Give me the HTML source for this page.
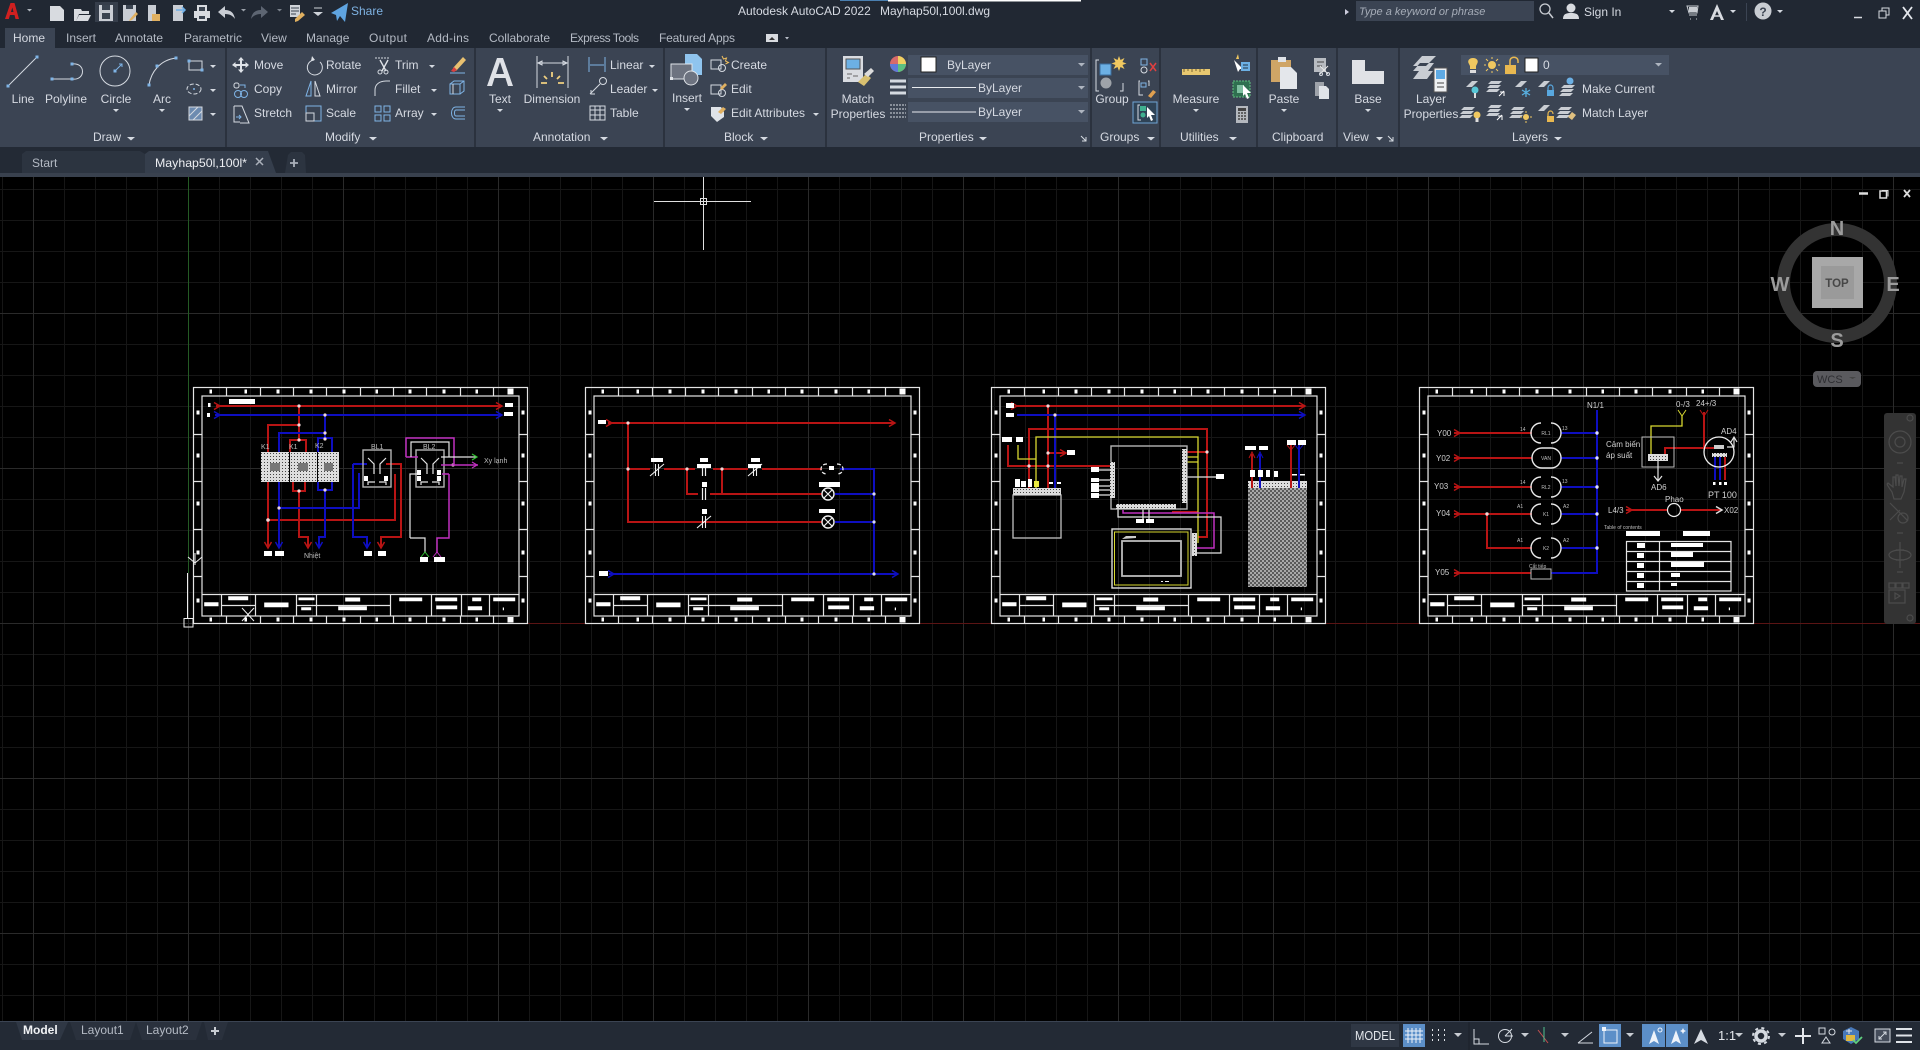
<!DOCTYPE html>
<html><head><meta charset="utf-8"><title>AutoCAD</title>
<style>
html,body{margin:0;padding:0;background:#000;overflow:hidden}
svg{display:block}
text{font-family:"Liberation Sans",sans-serif;font-size:12px;fill:#d6dae2}
.c{text-anchor:middle}
.m{fill:#b4bac4}
.d{font-size:7px;fill:#bdbdbd}
.e{font-size:8px;fill:#d0d0d0}
.r{stroke:#b81414;stroke-width:2;fill:none}
.b{stroke:#0e0ec0;stroke-width:2;fill:none}
.y{stroke:#d8d830;stroke-width:1.300;fill:none}
.g{stroke:#b4b4b4;stroke-width:1.400;fill:none}
.w{stroke:#e4e4e4;stroke-width:1.200;fill:none}
.p{stroke:#c030c0;stroke-width:1.500;fill:none}
.i{stroke:#d5dae1;stroke-width:1;fill:none}
.u{stroke:#7fb4e6;stroke-width:1;fill:none}
.f{fill:#fff}
</style></head><body>
<svg width="1920" height="1050" viewBox="0 0 1920 1050" xmlns="http://www.w3.org/2000/svg">
<defs>
<pattern id="g1" width="31" height="31" patternUnits="userSpaceOnUse" x="2" y="3"><path d="M.5 0V31M0 .5H31" stroke="#161616" fill="none"/></pattern>
<pattern id="g2" width="155" height="155" patternUnits="userSpaceOnUse" x="33" y="3"><path d="M.5 0V155M0 .5H155" stroke="#2a2a2a" fill="none"/></pattern>
<pattern id="hx" width="4" height="4" patternUnits="userSpaceOnUse"><rect width="4" height="4" fill="#a8a8a8"/><circle cx="1" cy="1" r=".9" fill="#222"/><circle cx="3" cy="3" r=".9" fill="#222"/></pattern>
<pattern id="dt" width="3" height="3" patternUnits="userSpaceOnUse"><rect width="3" height="3" fill="#ddd"/><rect width="1" height="1" fill="#444"/></pattern>
<path id="cr" d="M0 0h6l-3 3z" fill="#d5dae1"/>
<g id="fr">
<rect x="0" y="0" width="334" height="236" class="w"/>
<rect x="8.500" y="8.500" width="317" height="220" class="w"/>
<path class="w" d="M33 0V8M67 0V8M100 0V8M133 0V8M167 0V8M200 0V8M233 0V8M267 0V8M300 0V8M33 229V236M67 229V236M100 229V236M133 229V236M167 229V236M200 229V236M233 229V236M267 229V236M300 229V236M0 47H8M0 94H8M0 142H8M0 189H8M326 47H334M326 94H334M326 142H334M326 189H334M8.500 207H325.500M28 207V229M62 207V229M103 207V229M123 207V229M197 207V229M238 207V229M268 207V229M296 207V229M28 218H62M103 218H197"/>
<g class="f"><path d="M16 2h2.500v4H16zM51 2h2.500v4H51zM83 2h3v4h-3zM116 2h3v4h-3zM149 2h3v4h-3zM182 2h2.500v4H182zM215 2h3v4h-3zM249 2h3v4h-3zM282 2h2.500v4H282zM314 1h6v6h-6zM16 230h2.500v4H16zM51 230h2.500v4H51zM83 230h3v4h-3zM116 230h3v4h-3zM149 230h3v4h-3zM182 230h2.500v4H182zM215 230h3v4h-3zM249 230h3v4h-3zM282 230h2.500v4H282zM314 229.500h6v5.500h-6zM3 23h3v4H3zM3 66h3v4H3zM3 114h3v4H3zM3 163h3v4H3zM3 211h3v4H3zM328 23h3v4h-3zM328 66h3v4h-3zM328 114h3v4h-3zM328 163h3v4h-3zM328 211h3v4h-3z"/>
<path d="M10.700 214.700h14.300v4H10.700zM34.700 208.700h20v4h-20zM70.700 215h24.300v4.700H70.700zM105 210h16v2.700h-16zM107.700 219.700h10v3h-10zM151.700 210h15v4h-15zM144.700 218.700h28.700v4h-28.700zM205.700 210h23v3.700h-23zM241.700 210h22v3.700h-22zM242.700 218h21v3.700h-21zM278.700 210h9v3.700h-9zM274.300 218.700h14.300v4h-14.300zM299.700 210h22v3.700h-22zM309.300 220h1.200v2.700h-1.200z"/></g>
</g>
<g id="coil" fill="none" stroke="#e8e8e8" stroke-width="1.400"><path d="M-5-10A10 10 0 0 0-5 10M5-10A10 10 0 0 1 5 10"/></g>
<path id="ah" d="M-6-3.500L0 0L-6 3.500" fill="none" stroke-width="1.500"/>
<g id="lamp"><circle r="6" fill="none" stroke="#f0f0f0" stroke-width="1.400"/><path d="M-4-4L4 4M4-4L-4 4" stroke="#f0f0f0" stroke-width="1.200"/></g>
<g id="con"><path d="M-1.500-6V6M1.500-6V6" stroke="#f0f0f0" stroke-width="1.200"/></g>
<g id="nc"><path d="M-1.500-6V6M1.500-6V6M-7 6L7-6" stroke="#f0f0f0" stroke-width="1.100"/></g>
<rect id="dot" x="-1.500" y="-1.500" width="3" height="3" fill="#7fb4e6"/>
<g id="st"><path d="M-6-5h11l-3 3h-11zM-7-1h11l-3 3h-11zM-8 3h11l-3 3h-11z" fill="#c9cdd3"/></g>
<g id="sh"><path d="M-6-1l6-6h6l-6 6z" fill="#c9cdd3"/></g>
</defs>

<!-- canvas -->
<rect x="0" y="177" width="1920" height="844" fill="#000"/>
<rect x="0" y="177" width="1920" height="844" fill="url(#g1)"/>
<rect x="0" y="177" width="1920" height="844" fill="url(#g2)"/>
<path d="M188.500 177V573" stroke="#245a24"/>
<path d="M193 623.500H1920" stroke="#5a1414"/>

<!-- frames -->
<use href="#fr" x="193.500" y="387.500"/>
<use href="#fr" x="585.500" y="387.500"/>
<use href="#fr" x="991.500" y="387.500"/>
<use href="#fr" x="1419.500" y="387.500"/>

<!-- FRAME 1 -->
<g>
<path class="r" d="M216 406H502M299 406V440M268 548V425H299M290 452V440H306V452M293 482V491H305V482M299 491V537H308V548M268 520H395V474M386 464H401V537H381V548"/>
<path class="b" d="M215 415H502M325 415V438M279 548V433H325M318 452V438H332V452M318 482V490H332V482M325 490V537H319V548M279 508H359V473M353 464H367M353 464V537H367V548"/>
<use href="#ah" x="502" y="406" stroke="#b81414"/><use href="#ah" x="220" y="406" stroke="#b81414"/>
<use href="#ah" x="502" y="415" stroke="#0e0ec0"/><use href="#ah" x="220" y="415" stroke="#0e0ec0"/>
<use href="#ah" transform="translate(268 548) rotate(90)" stroke="#b81414"/><use href="#ah" transform="translate(279 548) rotate(90)" stroke="#0e0ec0"/>
<use href="#ah" transform="translate(308 548) rotate(90)" stroke="#b81414"/><use href="#ah" transform="translate(319 548) rotate(90)" stroke="#0e0ec0"/>
<use href="#ah" transform="translate(367 548) rotate(90)" stroke="#0e0ec0"/><use href="#ah" transform="translate(381 548) rotate(90)" stroke="#b81414"/>
<rect x="261" y="452" width="28" height="30" fill="url(#dt)"/><rect x="290" y="452" width="27" height="30" fill="url(#dt)"/><rect x="318" y="452" width="21" height="30" fill="url(#dt)"/>
<rect x="270" y="463" width="10" height="8" fill="#777"/><rect x="298" y="463" width="10" height="8" fill="#777"/><rect x="324" y="463" width="9" height="8" fill="#777"/>
<g fill="#f0d8d8"><circle cx="299" cy="406" r="1.600"/><circle cx="299" cy="425" r="1.600"/><circle cx="299" cy="440" r="1.600"/><circle cx="299" cy="491" r="1.600"/><circle cx="268" cy="520" r="1.800"/><circle cx="325" cy="415" r="1.600"/><circle cx="325" cy="433" r="1.600"/><circle cx="325" cy="439" r="1.600"/><circle cx="325" cy="490" r="1.600"/><circle cx="279" cy="508" r="1.600"/><circle cx="453" cy="465" r="1.600"/></g>
<rect x="363" y="450" width="28" height="37" class="g"/><rect x="416" y="450" width="28" height="37" class="g"/>
<path class="w" d="M368 458l6 6v10M386 458l-6 6v10M421 458l6 6v10M439 458l-6 6v10M368 485v-3h7M386 485v-3h-7M421 485v-3h7M439 485v-3h-7"/>
<g class="f"><path d="M364 476h4v5h-4zM384 476h4v5h-4zM417 470h4v5h-4zM437 470h4v5h-4zM417 476h4v5h-4zM437 476h4v5h-4z"/></g>
<path class="p" d="M406 457V438H454V465M406 457H418M441 465H478"/>
<path class="w" d="M411 457V442H449V457M441 457H477M410 538V474H417M410 538H425V553"/>
<path class="p" d="M449 474V538H437V553M442 474H449"/>
<path d="M472 454l5 3-5 3" stroke="#30c030" fill="none" stroke-width="1.200"/>
<path d="M472 462l5 3-5 3" stroke="#c030c0" fill="none" stroke-width="1.200"/>
<path d="M421 557l4-5 4 5" stroke="#30c030" fill="none"/><path d="M433 557l4-5 4 5" stroke="#c030c0" fill="none"/>
<g class="f"><path d="M229 399h26v5h-26zM208 403h2.500v4H208zM207 413h3v4h-3zM505 403h8v4h-8zM504 412h9v4h-9zM264 551h8v5h-8zM275 551h9v5h-9zM364 551h8v5h-8zM378 551h8v5h-8zM420 557h8v5h-8zM434 557h11v5h-11z"/></g>
<text x="261" y="449" class="d">K1</text><text x="289" y="449" class="d">K1</text><text x="315" y="448" class="d">K2</text><text x="371" y="449" class="d">BL1</text><text x="423" y="449" class="d">BL2</text><text x="484" y="463" class="d">Xy lạnh</text><text x="304" y="558" class="d">Nhiệt</text>
<path d="M195 553V565M188 557l7 6 7-6" stroke="#eee" fill="none"/>
<path d="M242 608L254 621M254 608L242 621" stroke="#eee" fill="none"/>
<path d="M187.500 573V618" stroke="#eee"/><rect x="184" y="618.500" width="9" height="8.500" fill="none" stroke="#eee"/>
</g>

<!-- FRAME 2 -->
<g>
<path class="r" d="M608 423H895M628 423V522H822M628 469H650M664 469H695M713 469H748M762 469H822M687 469V494H698M710 494H822M722 469V494"/>
<path class="b" d="M840 469H874V574M835 494H874M835 522H874M609 574H898"/>
<use href="#ah" x="895" y="423" stroke="#b81414"/><use href="#ah" x="612" y="423" stroke="#b81414"/>
<use href="#ah" x="898" y="574" stroke="#0e0ec0"/><use href="#ah" x="614" y="574" stroke="#0e0ec0"/>
<g fill="#f0d8d8"><circle cx="628" cy="423" r="1.600"/><circle cx="628" cy="469" r="1.600"/><circle cx="687" cy="469" r="1.600"/><circle cx="722" cy="469" r="1.600"/></g>
<g fill="#d8d8f0"><circle cx="874" cy="494" r="1.600"/><circle cx="874" cy="522" r="1.600"/><circle cx="874" cy="574" r="1.600"/></g>
<use href="#lamp" x="828" y="494"/><use href="#lamp" x="828" y="522"/>
<path d="M827 464c-8 0-8 10 0 10M837 464c8 0 8 10 0 10" stroke="#eee" stroke-dasharray="4 2" fill="none" stroke-width="1.200"/>
<use href="#nc" x="657" y="470"/><use href="#con" x="704" y="470"/><use href="#nc" x="755" y="470"/><use href="#con" x="704" y="494"/><use href="#nc" x="704" y="522"/>
<g class="f"><path d="M598 420h8v4h-8zM651 458h12v4h-12zM700 458h8v4h-8zM751 458h9v4h-9zM702 482h5v5h-5zM702 509h5v5h-5zM819 482h21v5h-21zM819 509h16v4h-16zM829 466h5v4h-5zM599 571h9v5h-9zM697 464h14v4h-14zM748 464h13v4h-13z"/></g>
</g>

<!-- FRAME 3 -->
<g>
<path class="r" d="M1017 406H1305M1048 406V488M1029 488V429H1207V537H1198M1008 445V466H1112M1048 453H1065M1187 452H1207M1172 512H1198"/>
<path class="b" d="M1017 415H1305M1055 415V488"/>
<path class="y" d="M1036 488V437H1198V543M1018 445V459H1036M1187 457H1198M1187 462H1198"/>
<path class="p" d="M1123 510V513H1214V548H1197"/>
<path class="w" d="M1118 509V517H1221V553H1197M1187 477H1216M1143 509V519M1149 509V519M1091 470H1110M1099 480H1110M1099 486H1110M1099 490H1110M1099 495H1110"/>
<use href="#ah" x="1017" y="406" stroke="#b81414"/><use href="#ah" x="1305" y="406" stroke="#b81414"/><use href="#ah" x="1305" y="415" stroke="#0e0ec0"/><use href="#ah" x="1066" y="453" stroke="#b81414"/>
<g fill="#f0d8d8"><circle cx="1048" cy="406" r="1.600"/><circle cx="1048" cy="453" r="1.600"/><circle cx="1048" cy="466" r="1.600"/><circle cx="1029" cy="466" r="1.600"/><circle cx="1055" cy="415" r="1.600"/><circle cx="1207" cy="452" r="1.600"/></g>
<rect x="1013" y="495" width="48" height="43" class="g"/>
<rect x="1013" y="488" width="48" height="7" fill="url(#dt)"/>
<rect x="1111" y="446" width="76" height="63" class="g"/>
<rect x="1182" y="449" width="5" height="54" fill="url(#dt)"/><rect x="1110" y="462" width="5" height="36" fill="url(#dt)"/><rect x="1116" y="504" width="60" height="5" fill="url(#dt)"/>
<rect x="1112" y="529" width="79" height="59" fill="none" stroke="#ddd" stroke-width="1.400"/>
<rect x="1114.500" y="532" width="73.500" height="53" fill="none" stroke="#d8d830" stroke-width="1"/>
<rect x="1122" y="541" width="59" height="35" fill="none" stroke="#bbb" stroke-width="1.800"/>
<path d="M1122 539l4-3h10v2z" fill="#ccc"/>
<path d="M1161 581h2v1h-2zM1165 581h4v1h-4z" fill="#eee"/>
<rect x="1192" y="533" width="5" height="23" fill="url(#dt)"/>
<rect x="1248" y="488" width="59" height="99" fill="url(#hx)"/>
<rect x="1248" y="481" width="59" height="7" fill="url(#dt)"/>
<path class="r" d="M1252 488V454M1291 445V488"/><path class="b" d="M1260 488V454M1299 445V488"/>
<path d="M1249 458l3-6 3 6" stroke="#b81414" fill="none"/><path d="M1257 458l3-6 3 6" stroke="#0e0ec0" fill="none"/>
<path d="M1287 445l4 5 4-5" stroke="#b81414" fill="none"/><path d="M1295 445l4 5 4-5" stroke="#0e0ec0" fill="none"/>
<g class="f"><path d="M1006 403h8v5h-8zM1006 413h8v4h-8zM1067 450h8v5h-8zM1002 437h10v5h-10zM1016 437h7v5h-7zM1015 479h5v8h-5zM1021 481h5v6h-5zM1028 479h4v8h-4zM1216 474h8v5h-8zM1091 467h8v5h-8zM1091 478h8v4h-8zM1091 483h8v9h-8zM1091 493h8v5h-8zM1136 519h8v4h-8zM1146 519h8v4h-8zM1245 446h11v4h-11zM1259 446h9v4h-9zM1287 440h9v5h-9zM1298 440h8v5h-8zM1250 470h5v7h-5zM1258 470h5v7h-5zM1266 470h4v7h-4zM1274 471h4v6h-4zM1292 474h5v1.500h-5zM1300 474h5v1.500h-5zM1049 482h4v2h-4zM1057 482h4v2h-4z"/></g>
<rect x="1034" y="481" width="5" height="6" fill="#e8e840"/>
</g>

<!-- FRAME 4 -->
<g>
<path class="r" d="M1454 433H1532M1454 458H1532M1454 487H1532M1454 514H1532M1487 514V548H1532M1454 573H1531M1626 510H1667M1681 510H1722M1704 448V412M1665 455V448H1723M1725 455V480"/>
<path class="b" d="M1597 410V573H1551M1561 433H1597M1561 458H1597M1561 487H1597M1561 514H1597M1561 548H1597M1715 455V480M1720 455V480"/>
<path class="y" d="M1651 454V426H1682V416"/>
<path d="M1678 410l4 6 4-6" stroke="#d8d830" fill="none"/><path d="M1700 410l4 6 4-6" stroke="#b81414" fill="none"/>
<use href="#ah" x="1460" y="433" stroke="#b81414"/><use href="#ah" x="1460" y="458" stroke="#b81414"/><use href="#ah" x="1460" y="487" stroke="#b81414"/><use href="#ah" x="1460" y="514" stroke="#b81414"/><use href="#ah" x="1460" y="573" stroke="#b81414"/><use href="#ah" x="1632" y="510" stroke="#b81414"/><use href="#ah" x="1722" y="510" stroke="#ddd"/>
<g fill="#dfdfff"><circle cx="1597" cy="433" r="1.700"/><circle cx="1597" cy="458" r="1.700"/><circle cx="1597" cy="487" r="1.700"/><circle cx="1597" cy="514" r="1.700"/><circle cx="1597" cy="548" r="1.700"/></g><circle cx="1487" cy="514" r="1.700" fill="#f0d8d8"/>
<use href="#coil" x="1546" y="433"/><use href="#coil" x="1546" y="487"/><use href="#coil" x="1546" y="514"/><use href="#coil" x="1546" y="548"/>
<rect x="1532" y="448" width="29" height="20" rx="10" fill="none" stroke="#e8e8e8" stroke-width="1.400"/>
<rect x="1531" y="569" width="20" height="10" fill="none" stroke="#bbb"/>
<rect x="1642" y="437" width="32" height="30" fill="none" stroke="#bbb"/>
<rect x="1648" y="454" width="20" height="7" fill="url(#dt)"/>
<path class="w" d="M1658 461V480M1654 476l4 5 4-5"/>
<circle cx="1719" cy="452" r="15" fill="none" stroke="#eee" stroke-width="1.300"/>
<rect x="1714" y="445" width="10" height="4" fill="#ccc"/><rect x="1712" y="453" width="15" height="4" fill="url(#dt)"/>
<path class="w" d="M1727 447H1734V438M1731 442l3-5 3 5"/>
<circle cx="1674" cy="510" r="6.500" fill="none" stroke="#eee" stroke-width="1.200"/>
<g class="f"><path d="M1713 482h2.500v3h-2.500zM1719 482h2.500v3h-2.500zM1724 482h3v3h-3zM1626 531h34v5h-34zM1683 531h27v5h-27zM1637 543h8v5h-8zM1637 553h7v5h-7zM1637 563h7v5h-7zM1637 573h7v5h-7zM1637 583h7v5h-7zM1671 543h32v4h-32zM1671 552h22v5h-22zM1671 562h33v5h-33zM1671 573h9v4h-9zM1671 583h6v3h-6z"/></g>
<path class="w" d="M1626.500 541.500H1731V591H1626.500ZM1626.500 551.500H1731M1626.500 561.500H1731M1626.500 571.500H1731M1626.500 581.500H1731M1659.500 541.500V591"/>
<text x="1437" y="436" class="e">Y00</text><text x="1436" y="461" class="e">Y02</text><text x="1434" y="489" class="e">Y03</text><text x="1436" y="516" class="e">Y04</text><text x="1435" y="575" class="e">Y05</text>
<text x="1587" y="408" class="e">N1/1</text><text x="1676" y="407" class="e">0-/3</text><text x="1696" y="406" class="e">24+/3</text><text x="1721" y="434" class="e">AD4</text>
<text x="1606" y="447" class="e">Cảm biến</text><text x="1606" y="458" class="e">áp suất</text><text x="1651" y="490" class="e">AD6</text>
<text x="1708" y="498" style="font-size:9px;fill:#d0d0d0">PT 100</text><text x="1665" y="502" class="e">Phao</text><text x="1608" y="513" class="e">L4/3</text><text x="1724" y="513" class="e">X02</text>
<text x="1604" y="529" style="font-size:5px;fill:#bdbdbd">Table of contents</text>
<text x="1546" y="435" class="c" style="font-size:5px;fill:#bdbdbd">RL1</text><text x="1546" y="460" class="c" style="font-size:5px;fill:#bdbdbd">VAN</text><text x="1546" y="489" class="c" style="font-size:5px;fill:#bdbdbd">RL2</text><text x="1546" y="516" class="c" style="font-size:5px;fill:#bdbdbd">K1</text><text x="1546" y="550" class="c" style="font-size:5px;fill:#bdbdbd">K2</text>
<text x="1520" y="431" style="font-size:5px;fill:#bdbdbd">14</text><text x="1562" y="430" style="font-size:5px;fill:#bdbdbd">13</text><text x="1520" y="484" style="font-size:5px;fill:#bdbdbd">14</text><text x="1562" y="483" style="font-size:5px;fill:#bdbdbd">13</text><text x="1517" y="508" style="font-size:5px;fill:#bdbdbd">A1</text><text x="1563" y="508" style="font-size:5px;fill:#bdbdbd">A2</text><text x="1517" y="542" style="font-size:5px;fill:#bdbdbd">A1</text><text x="1563" y="542" style="font-size:5px;fill:#bdbdbd">A2</text><text x="1529" y="568" style="font-size:5px;fill:#bdbdbd">Cắt tiếp</text>
</g>

<!-- crosshair -->
<path d="M654 201.500H751M703.500 177V250" stroke="#e0e0e0"/><rect x="700.500" y="198.500" width="6" height="6" fill="none" stroke="#e0e0e0"/>

<!-- view controls -->
<path d="M1859 193.500h9" stroke="#ddd" stroke-width="2.500"/><rect x="1880" y="191" width="6.500" height="7" fill="none" stroke="#ddd" stroke-width="1.500"/><path d="M1882 190.500h6v6" stroke="#ddd" fill="none"/><path d="M1904 190l6 7M1910 190l-6 7" stroke="#ddd" stroke-width="1.800"/>

<!-- viewcube -->
<circle cx="1837" cy="283" r="53.500" fill="none" stroke="#333" stroke-width="13"/>
<rect x="1812" y="257" width="51" height="51" fill="#a8a8a8"/><rect x="1821" y="266" width="33" height="33" fill="#9a9a9a"/>
<text x="1837" y="287" class="c" style="font-size:11.500px;font-weight:bold;fill:#474747">TOP</text>
<text x="1837" y="235" class="c" style="font-size:20px;font-weight:bold;fill:#9c9c9c">N</text><text x="1837" y="347" class="c" style="font-size:20px;font-weight:bold;fill:#9c9c9c">S</text><text x="1780" y="291" class="c" style="font-size:20px;font-weight:bold;fill:#9c9c9c">W</text><text x="1893" y="291" class="c" style="font-size:20px;font-weight:bold;fill:#9c9c9c">E</text>
<rect x="1813" y="371" width="48" height="16" rx="4" fill="#5a5a5e"/><text x="1817" y="383" style="font-size:11px;fill:#2e2e32">WCS</text><path d="M1849 377h7l-3.500 2z" fill="#444"/>

<!-- navbar -->
<rect x="1884" y="413" width="32" height="211" rx="3" fill="#333"/>
<g fill="none" stroke="#4c4c4c" stroke-width="1.200">
<circle cx="1900" cy="442" r="11"/><circle cx="1900" cy="442" r="5"/>
<path d="M1892 492c-4-6-6-8-4-9l5 4v-10l2 0 1 9v-11h2l1 11 1-10h2l0 11 2-8h2l-2 13-3 7h-7z"/>
<path d="M1890 503l18 18M1890 520l10-10"/><circle cx="1903" cy="518" r="5"/>
<path d="M1900 542v26M1896 550h8M1896 560h8"/><ellipse cx="1900" cy="555" rx="11" ry="5"/>
<rect x="1889" y="583" width="6" height="5"/><rect x="1896" y="583" width="6" height="5"/><rect x="1903" y="583" width="6" height="5"/><rect x="1889" y="590" width="16" height="13"/><path d="M1895 593l5 3-5 3z"/>
<circle cx="1910" cy="418" r="3"/><circle cx="1910" cy="618" r="3"/><path d="M1897 463h6M1897 533h6M1897 572h6"/>
</g>

<!-- TITLE & RIBBON BG -->
<rect x="0" y="0" width="1920" height="48" fill="#212833"/>
<rect x="840" y="0" width="48" height="1" fill="#4a7fb0"/><rect x="888" y="0" width="193" height="1.500" fill="#fff"/>
<rect x="0" y="48" width="1920" height="99" fill="#3b4453"/>
<rect x="0" y="147" width="1920" height="26" fill="#232a35"/>
<rect x="0" y="173" width="1920" height="4" fill="#39414e"/>

<!-- app logo + QAT -->
<path d="M5 19L10.500 3H14.500L19 19H15.500L14.500 15H10L8.800 19ZM11 12H13.500L12.300 7.500Z" fill="#d02020"/>
<path d="M27 9h5l-2.500 2.500z" fill="#b0b5bd"/>
<path d="M50 6h10l4 4v11H50z" fill="#d8dbe0"/>
<path d="M74 9h7l1 2h7v3H79l-3 7h-2zM79 15h12l-3 6H76z" fill="#d8dbe0"/>
<rect x="95" y="2" width="23" height="20" fill="#363e4b"/>
<path d="M99 5h14v16H99z" fill="#c9cdd4"/><rect x="102" y="5" width="8" height="5" fill="#3a4350"/><rect x="102" y="13" width="8" height="6" fill="#3a4350"/>
<path d="M123 5h13v16h-13z" fill="#c9cdd4"/><rect x="126" y="5" width="7" height="4" fill="#3a4350"/><path d="M130 19l6-7 2 2-6 6-3 1z" fill="#e0b060"/>
<path d="M148 5h8v16h-8z" fill="#c9cdd4"/><path d="M152 14h8v7h-8z" fill="#e0b060"/>
<path d="M173 5h10v16h-10z" fill="#c9cdd4"/><path d="M176 10h9M182 7l3 3-3 3" stroke="#6fb0e8" fill="none" stroke-width="1.500"/>
<path d="M197 5h10v6h3v7h-3v3h-10v-3h-3v-7h3z" fill="#d8dbe0"/><rect x="199" y="7" width="6" height="4" fill="#3a4350"/><rect x="199" y="16" width="6" height="3" fill="#3a4350"/>
<path d="M218 12l7-6v4c6 0 9 3 10 9-2-3-5-5-10-5v4z" fill="#c9cdd4"/>
<path d="M241 9h5l-2.500 2.500z" fill="#9aa0a9"/>
<path d="M268 12l-7-6v4c-6 0-9 3-10 9 2-3 5-5 10-5v4z" fill="#5d6572"/>
<path d="M277 9h5l-2.500 2.500z" fill="#7b828c"/>
<rect x="290" y="5" width="10" height="12" fill="#cfd3d9"/><path d="M295 19l7-7 3 3-7 6-3 1z" fill="#e0b060"/><path d="M291 8h8M291 11h8M291 14h5" stroke="#3a4350"/>
<path d="M314 8h8" stroke="#cfd3d9"/><path d="M313 12h10l-5 4z" fill="#cfd3d9"/>
<path d="M331 13L348 3l-3 19-5-6-3 5-1-6z" fill="#5fa4e0"/>
<text x="351" y="15" style="fill:#7eb2e2">Share</text>
<text x="738" y="15">Autodesk AutoCAD 2022</text><text x="880" y="15">Mayhap50l,100l.dwg</text>

<!-- right header -->
<path d="M1345 9l4 3-4 3z" fill="#ccd"/>
<rect x="1356" y="1" width="178" height="20" fill="#3b4453"/>
<text x="1359" y="15" style="font-style:italic;font-size:11px;fill:#a6adb8">Type a keyword or phrase</text>
<circle cx="1545" cy="9" r="5" fill="none" stroke="#c8ccd2" stroke-width="1.300"/><path d="M1549 13l4 5" stroke="#c8ccd2" stroke-width="1.500"/>
<circle cx="1571" cy="8" r="4.500" fill="#d8dbe0"/><path d="M1563 19c0-5 3-6 8-6s8 1 8 6z" fill="#d8dbe0"/>
<text x="1584" y="16">Sign In</text>
<use href="#cr" x="1669" y="10"/>
<path d="M1687 6h11l-1 7h-8zM1689 15h8M1690 19h1M1696 19h1" stroke="#c8ccd2" fill="none"/><path d="M1689 7h8v5h-8z" fill="#c8ccd2"/>
<path d="M1710 20l7-16 7 16h-3l-4-9-4 9z" fill="#d8dbe0"/><path d="M1713 16h8" stroke="#d8dbe0" stroke-width="1.500"/>
<use href="#cr" x="1730" y="10"/><path d="M1746.500 3v18" stroke="#3b4453"/>
<circle cx="1763" cy="11" r="8.500" fill="#c8ccd2"/><text x="1763" y="16" class="c" style="font-size:12px;font-weight:bold;fill:#3a4350">?</text>
<use href="#cr" x="1777" y="10"/>
<path d="M1854 17.500h8" stroke="#d8dbe0" stroke-width="1.500"/><rect x="1879" y="11" width="7" height="7" fill="none" stroke="#d8dbe0"/><path d="M1882 11V8h7v7h-3" fill="none" stroke="#d8dbe0"/>
<path d="M1903 7l9 12M1912 7l-9 12" stroke="#e4e7ec" stroke-width="1.800"/>

<!-- ribbon tabs -->
<rect x="5" y="28" width="50" height="20" fill="#3b4453"/>
<text x="13" y="42">Home</text>
<text x="66" y="42" class="m">Insert</text><text x="115" y="42" class="m">Annotate</text><text x="184" y="42" class="m">Parametric</text><text x="261" y="42" class="m">View</text><text x="306" y="42" class="m">Manage</text><text x="369" y="42" class="m" textLength="38">Output</text><text x="427" y="42" class="m" textLength="42">Add-ins</text><text x="489" y="42" class="m" textLength="61">Collaborate</text><text x="570" y="42" class="m" textLength="69">Express Tools</text><text x="659" y="42" class="m" textLength="76">Featured Apps</text>
<rect x="766" y="34" width="12" height="8" fill="#d8dbe0"/><path d="M769 40l3-3 3 3z" fill="#333"/><path d="M785 37h4l-2 2.500z" fill="#b9bfc9"/>

<!-- ribbon separators -->
<path d="M226 48V147M475 48V147M664 48V147M826 48V147M1091 48V147M1160 48V147M1257 48V147M1337 48V147M1399 48V147" stroke="#262d38" stroke-width="1.500"/>

<!-- Draw -->
<path class="i" d="M8 86L37 57"/><use href="#dot" x="8" y="86"/><use href="#dot" x="37" y="57"/>
<path class="i" d="M52 79H72M72 64C86 62 86 81 72 79"/><use href="#dot" x="52" y="79"/><use href="#dot" x="72" y="79"/><use href="#dot" x="72" y="64"/>
<circle cx="115" cy="71" r="15" class="i"/><path class="u" d="M115 71L122 64M119 64h3v3"/><use href="#dot" x="115" y="71"/>
<path class="i" d="M149 85C151 72 160 60 176 58"/><use href="#dot" x="149" y="85"/><use href="#dot" x="157" y="66"/><use href="#dot" x="176" y="58"/>
<text x="23" y="103" class="c">Line</text><text x="66" y="103" class="c">Polyline</text><text x="116" y="103" class="c">Circle</text><text x="162" y="103" class="c">Arc</text>
<use href="#cr" x="113" y="109"/><use href="#cr" x="159" y="109"/>
<rect x="189" y="61" width="13" height="9" class="i"/><use href="#dot" x="189" y="61"/><use href="#dot" x="202" y="70"/>
<ellipse cx="194" cy="89" rx="7" ry="5" class="i" stroke-dasharray="4 2"/><circle cx="194" cy="89" r="1" fill="#7fb4e6"/>
<rect x="189" y="107" width="13" height="13" fill="#6d8bb0" stroke="#d5dae1"/><path d="M189 116l9-9M193 120l9-9" stroke="#d5dae1"/>
<use href="#cr" x="210" y="65"/><use href="#cr" x="210" y="89"/><use href="#cr" x="210" y="113"/>
<text x="93" y="141">Draw</text><path d="M127 137h8l-4 3.500z" fill="#d5dae1"/>

<!-- Modify -->
<path d="M241 57l3 3.500h-2V64h3.500v-2l3.500 3-3.500 3v-2H242v3.500h2l-3 3.500-3-3.500h2V66h-3.500v2L232 65l3.500-3v2H240v-3.500h-2z" fill="#dfe3e8"/>
<path class="u" d="M240 85h5v3"/><circle cx="238" cy="94" r="3.500" class="u"/><circle cx="244" cy="94" r="3.500" class="u"/><rect x="234" y="83" width="5" height="5" class="i" rx="2"/>
<path class="i" d="M234 106h8l7 17h-9M234 106v16h6"/><path class="u" d="M236 117h5M239 115l2 2-2 2"/>
<path class="i" d="M320 62a7.500 7.500 0 1 1-6-2"/><path d="M312 56l3 4-4 1z" fill="#dfe3e8"/>
<path class="u" d="M311 81L306 96H311z"/><path class="i" d="M315 81L320 96H315z"/>
<rect x="306" y="106" width="15" height="15" class="u"/><rect x="306" y="113" width="8" height="8" class="i"/>
<path class="i" d="M375 58h14" stroke-dasharray="2 1"/><path d="M380 60l6 11M388 60l-6 11" stroke="#dfe3e8" stroke-width="1.400"/><circle cx="380" cy="72" r="2" class="i"/><circle cx="386" cy="72" r="2" class="i"/>
<path class="i" d="M375 96V90C375 84 380 81 386 81H390"/>
<rect x="375" y="106" width="6" height="6" class="u"/><rect x="384" y="106" width="6" height="6" class="u"/><rect x="375" y="115" width="6" height="6" class="u"/><rect x="384" y="115" width="6" height="6" class="u"/>
<text x="254" y="69">Move</text><text x="326" y="69">Rotate</text><text x="395" y="69">Trim</text><text x="254" y="93">Copy</text><text x="326" y="93">Mirror</text><text x="395" y="93">Fillet</text><text x="254" y="117">Stretch</text><text x="326" y="117">Scale</text><text x="395" y="117">Array</text>
<use href="#cr" x="429" y="65"/><use href="#cr" x="431" y="89"/><use href="#cr" x="431" y="113"/>
<path d="M453 68l10-11 3 3-10 11z" fill="#e8c070"/><path d="M451 71l3-4 3 3-3 2z" fill="#d84040"/><path class="u" d="M450 73h15"/>
<path class="u" d="M450 84h10v10h-10zM450 84l4-3h10v10l-4 3M460 84l4-3"/><path class="i" d="M453 84v10"/>
<path class="u" d="M465 107h-9c-6 0-6 12 0 12h9M465 110h-9c-2 0-2 6 0 6h9"/>
<text x="325" y="141">Modify</text><path d="M369 137h8l-4 3.500z" fill="#d5dae1"/>

<!-- Annotation -->
<path d="M487 86L497 58H503L513 86H508L505.500 78H494.500L492 86ZM496 74H504L500 62Z" fill="#dfe2e7"/>
<text x="500" y="103" class="c">Text</text><use href="#cr" x="497" y="109"/>
<path class="i" d="M537 56V88M568 56V88M538 63H567M538 63l4-2v4zM567 63l-4-2v4z"/>
<path d="M552 72v5M544 76l3 3M560 76l-3 3M541 83h6M558 83h6" stroke="#f0d080" stroke-width="1.800"/>
<text x="552" y="103" class="c">Dimension</text>
<path class="u" d="M589 57V72M605 57V72M590 65H604"/>
<path class="i" d="M590 94L600 84M591 90v4h4"/><circle cx="603" cy="81" r="3.500" class="i"/>
<rect x="590" y="106" width="15" height="14" class="i"/><path class="i" d="M590 110h15M590 115h15M595 106v14M600 106v14"/>
<text x="610" y="69">Linear</text><text x="610" y="93">Leader</text><text x="610" y="117">Table</text>
<use href="#cr" x="649" y="65"/><use href="#cr" x="652" y="89"/>
<text x="533" y="141">Annotation</text><path d="M600 137h8l-4 3.500z" fill="#d5dae1"/>

<!-- Block -->
<path d="M685 54h12l5 5v16h-17z" fill="#8fc4ee"/>
<rect x="671" y="64" width="21" height="15" fill="#6d7380" stroke="#dfe3e8"/><circle cx="691" cy="78" r="7" fill="#6d7380" stroke="#dfe3e8"/><rect x="670" y="77" width="3" height="3" fill="#dfe3e8"/>
<text x="687" y="102" class="c">Insert</text><use href="#cr" x="684" y="108"/>
<path class="i" d="M711 60h10v9h-10z"/><circle cx="722" cy="68" r="3.500" class="i"/><path d="M722 56l1.500 3 3-1-1 3 3 1.500-3 1.500" stroke="#f0c060" fill="none"/>
<path class="i" d="M711 85h10v9h-10z"/><circle cx="722" cy="93" r="3.500" class="i"/><path d="M720 88l5-5 2 2-5 5z" fill="#e0b060"/>
<path d="M711 107h10l3 5v5l-7 5-6-6z" fill="#dfe3e8"/><path d="M718 112l5-5 3 2-5 5z" fill="#e0b060"/>
<text x="731" y="69">Create</text><text x="731" y="93">Edit</text><text x="731" y="117">Edit Attributes</text><use href="#cr" x="813" y="113"/>
<text x="724" y="141">Block</text><path d="M760 137h8l-4 3.500z" fill="#d5dae1"/>

<!-- Properties -->
<rect x="843" y="56" width="20" height="26" fill="#d9dce1"/><rect x="846" y="59" width="14" height="10" fill="#6cb0e4" stroke="#555"/>
<path d="M847 74h5M847 78h3M853 76h5" stroke="#666"/><path d="M858 82l8-8 5 4-7 8z" fill="#d8c070"/><path d="M864 74l7-6 3 3-6 6z" fill="#dcdcdc"/>
<text x="858" y="103" class="c">Match</text><text x="858" y="118" class="c">Properties</text>
<circle cx="898" cy="64" r="8" fill="#d86a6a"/><path d="M898 64V56A8 8 0 0 1 906 64Z" fill="#f0d060"/><path d="M898 64H906A8 8 0 0 1 898 72Z" fill="#5cc080"/><path d="M898 64V72A8 8 0 0 1 890 64Z" fill="#5f7ad8"/>
<path d="M890 81h16M890 87h16M890 93h16" stroke="#d5dae1" stroke-width="3"/>
<path d="M890 105h16M890 109h16M890 113h16M890 117h16" stroke="#d5dae1" stroke-dasharray="2 1"/>
<rect x="908" y="55" width="180" height="20" fill="#475264"/><rect x="908" y="78" width="180" height="20" fill="#475264"/><rect x="908" y="102" width="180" height="20" fill="#475264"/>
<rect x="921" y="57" width="15" height="15" fill="#fff" stroke="#222"/>
<text x="947" y="69">ByLayer</text>
<path d="M912 87.500H976M912 112H976" stroke="#e8ebef"/>
<text x="978" y="92">ByLayer</text><text x="978" y="116">ByLayer</text>
<path d="M1078 63h7l-3.500 3.500zM1078 86h7l-3.500 3.500zM1078 110h7l-3.500 3.500z" fill="#aeb5c0"/>
<text x="919" y="141">Properties</text><path d="M979 137h8l-4 3.500z" fill="#d5dae1"/>
<path class="i" d="M1081 136l5 5M1086 137v4h-4"/>

<!-- Groups -->
<path class="i" d="M1099 60h-3v31h3M1120 91h3v-8"/><rect x="1100" y="64" width="11" height="11" fill="#6cb0e4" stroke="#3d6fa0"/><circle cx="1106" cy="83" r="5.500" fill="#9ea3a9"/>
<path d="M1119 56l1.500 4 4-2-2 4 4 1.500-4 1.500 2 4-4-2-1.500 4-1.500-4-4 2 2-4-4-1.500 4-1.500-2-4 4 2z" fill="#f0c860"/>
<text x="1112" y="103" class="c">Group</text>
<rect x="1141" y="59" width="6" height="6" class="u"/><circle cx="1144" cy="70" r="3" class="i"/><path d="M1150 63l6 8M1156 63l-6 8" stroke="#e04040" stroke-width="1.500"/>
<path class="i" d="M1140 81h-1v14h4M1148 81h1v5"/><rect x="1141" y="83" width="5" height="4" class="u"/><path d="M1148 96l5-6 3 2-5 6z" fill="#e0a050"/>
<rect x="1133" y="102" width="24" height="21" fill="#2f4356" stroke="#6fa4d4"/><path class="i" d="M1140 105h-2v15h3"/><rect x="1140" y="106" width="6" height="5" fill="#40b090"/><circle cx="1143" cy="115" r="2.500" fill="#40b090"/><path d="M1147 107l8 8-4 0 2 5-2 1-2-5-2 2z" fill="#fff"/>
<text x="1100" y="141">Groups</text><path d="M1147 137h8l-4 3.500z" fill="#d5dae1"/>

<!-- Utilities -->
<rect x="1182" y="69" width="28" height="6" fill="#e8c870"/><path d="M1184 69v3M1188 69v2M1192 69v3M1196 69v2M1200 69v3M1204 69v2" stroke="#7a6630"/>
<text x="1196" y="103" class="c">Measure</text><use href="#cr" x="1193" y="109"/>
<path d="M1234 60l4 12 2-3 3 0z" fill="#fff"/><path d="M1238 54l-2 5 3 0z" fill="#f0c860"/><rect x="1241" y="62" width="9" height="9" fill="#6cb0e4"/><path d="M1243 65h5M1243 68h5" stroke="#234"/>
<rect x="1233" y="81" width="17" height="16" fill="#2f7050" stroke="#60c080" stroke-dasharray="2 1"/><path d="M1237 85h7v8h-7z" fill="#7fc0a0"/><path d="M1243 85l8 8-4 0 2 5-2 1-2-5-2 2z" fill="#fff"/>
<rect x="1236" y="106" width="12" height="17" fill="#b4b8be"/><rect x="1238" y="108" width="8" height="3" fill="#444"/><path d="M1238 113h2M1241 113h2M1244 113h2M1238 116h2M1241 116h2M1244 116h2M1238 119h2M1241 119h2M1244 119h2" stroke="#444" stroke-width="1.500"/>
<text x="1180" y="141">Utilities</text><path d="M1229 137h8l-4 3.500z" fill="#d5dae1"/>

<!-- Clipboard -->
<path d="M1271 60h8v-3h6v3h6v22h-20z" fill="#cfa566"/><rect x="1278" y="57" width="8" height="5" fill="#dfe3e8"/>
<path d="M1280 67h11l6 6v16h-17z" fill="#e4e7eb"/>
<text x="1284" y="103" class="c">Paste</text><use href="#cr" x="1281" y="109"/>
<path d="M1314 58h12v14h-12z" fill="#b8bcc2"/><path d="M1317 62h7M1317 66h5" stroke="#444"/><path d="M1320 66l8 8M1328 66l-8 8" stroke="#e8e8e8"/><circle cx="1321" cy="74" r="1.500" class="i"/><circle cx="1328" cy="74" r="1.500" class="i"/>
<path d="M1315 82h9v14h-9z" fill="#9ea3aa"/><path d="M1319 86h7l3 3v10h-10z" fill="#dfe3e8"/>
<text x="1272" y="141">Clipboard</text>

<!-- View -->
<path d="M1352 60h13v11h19v13h-32z" fill="#e0e2e6"/>
<text x="1368" y="103" class="c">Base</text><use href="#cr" x="1365" y="109"/>
<text x="1343" y="141">View</text><path d="M1376 137h7l-3.500 3.500z" fill="#d5dae1"/><path class="i" d="M1388 136l5 5M1393 137v4h-4"/>

<!-- Layers -->
<path d="M1422 56h14l-10 10h-13zM1420 63l-7 8h15l6-8zM1419 71l-6 8h14l6-8z" fill="#c9cdd3"/>
<rect x="1434" y="68" width="13" height="24" fill="#eef0f2" stroke="#555"/><rect x="1436" y="70" width="9" height="9" fill="#5eaae4"/><path d="M1437 83h7M1437 87h7" stroke="#444"/>
<text x="1431" y="103" class="c">Layer</text><text x="1431" y="118" class="c">Properties</text>
<rect x="1461" y="55" width="208" height="20" fill="#475264"/>
<path d="M1473 58c4 0 6 3 4 6l-1 2v3h-6v-3l-1-2c-2-3 0-6 4-6z" fill="#f0c860"/><rect x="1470" y="70" width="6" height="3" fill="#ddd"/>
<circle cx="1492" cy="65" r="4" fill="#f0c860"/><path d="M1492 57v2M1492 71v2M1484 65h2M1498 65h2M1486 59l2 2M1496 69l2 2M1498 59l-2 2M1488 69l-2 2" stroke="#f0c860"/>
<rect x="1505" y="65" width="11" height="9" fill="#e8b850"/><path d="M1510 65v-4c0-5 8-5 8 0v2" stroke="#e8b850" fill="none" stroke-width="1.500"/>
<rect x="1525" y="58" width="13" height="14" fill="#fff" stroke="#222"/><text x="1543" y="69">0</text>
<path d="M1655 63h7l-3.500 3.500z" fill="#aeb5c0"/>
<use href="#sh" x="1472" y="88"/><circle cx="1475" cy="90" r="3.500" fill="#58c8d8"/><rect x="1474" y="93" width="2" height="5" fill="#ddd"/>
<use href="#st" x="1497" y="86"/><path d="M1499 96l5-5M1500 92h4v4" stroke="#fff" fill="none"/>
<use href="#sh" x="1521" y="88"/><path d="M1526 88v9M1522 90l8 5M1530 90l-8 5" stroke="#58b0e0" stroke-width="1.300"/>
<use href="#sh" x="1544" y="88"/><rect x="1547" y="90" width="7" height="6" fill="#58a8e0"/><path d="M1548 90v-2c0-4 5-4 5 0v2" stroke="#58a8e0" fill="none" stroke-width="1.200"/>
<use href="#st" x="1570" y="90"/><circle cx="1570" cy="81" r="3.500" fill="#6cb0e4"/>
<use href="#st" x="1470" y="112"/><circle cx="1477" cy="115" r="3.500" fill="#f0c860"/><rect x="1475.500" y="118" width="3" height="4" fill="#ddd"/>
<use href="#st" x="1497" y="110"/><path d="M1497 120l5-5M1498 116h4v4" stroke="#fff" fill="none"/>
<use href="#st" x="1520" y="112"/><circle cx="1526" cy="117" r="3" fill="#f0c860"/><path d="M1526 111v2M1526 121v2M1520 117h2M1530 117h2" stroke="#f0c860"/>
<use href="#sh" x="1544" y="112"/><rect x="1547" y="116" width="7" height="6" fill="#e8b850"/><path d="M1548 116v-2c0-4 5-4 5 0" stroke="#e8b850" fill="none" stroke-width="1.200"/>
<use href="#st" x="1567" y="112"/><path d="M1568 117l4-5 4 3-4 5z" fill="#e0c080"/>
<text x="1582" y="93">Make Current</text><text x="1582" y="117">Match Layer</text>
<text x="1512" y="141">Layers</text><path d="M1554 137h8l-4 3.500z" fill="#d5dae1"/>

<!-- doc tabs -->
<path d="M22 173V154l4-3H140l5 3V173z" fill="#2c3440"/>
<path d="M145 173V154l4-3H268l8 22z" fill="#353e4c"/>
<path d="M285 173l3-18 3-3h11l3 3 1 18z" fill="#2c3440"/>
<text x="32" y="167" class="m">Start</text><text x="155" y="167" textLength="92" lengthAdjust="spacingAndGlyphs" style="fill:#eceef2">Mayhap50l,100l*</text>
<path d="M256 158l7 7M263 158l-7 7" stroke="#aab0ba" stroke-width="1.500"/>
<path d="M294 159v8M290 163h8" stroke="#aab0ba" stroke-width="1.800"/>

<!-- status bar -->
<rect x="0" y="1021" width="1920" height="29" fill="#232a35"/>
<rect x="0" y="1021" width="1920" height="1" fill="#3b4453"/>
<path d="M16 1022l6 18h38l8-18z" fill="#2f3744"/><path d="M70 1022l6 18h54l6-18zM136 1022l6 18h54l6-18zM204 1022l4 18h14l6-18z" fill="#2a313d"/>
<text x="23" y="1034" style="font-weight:bold;fill:#f0f2f5">Model</text><text x="81" y="1034" class="m">Layout1</text><text x="146" y="1034" class="m">Layout2</text>
<path d="M215 1027v8M211 1031h8" stroke="#c8ccd2" stroke-width="2"/>

<rect x="1351" y="1024" width="48" height="23" fill="#2f3744"/><text x="1355" y="1040" textLength="40" lengthAdjust="spacingAndGlyphs" style="font-size:13px;fill:#e4e7ec">MODEL</text>
<rect x="1403" y="1024" width="22" height="23" fill="#5c8fc8"/><path d="M1408 1028v15M1412 1028v15M1416 1028v15M1420 1028v15M1405 1031h18M1405 1035h18M1405 1039h18" stroke="#eef3fa"/>
<path d="M1432 1030h1M1438 1030h1M1444 1030h1M1432 1035h1M1438 1035h1M1444 1035h1M1432 1040h1M1438 1040h1M1444 1040h1" stroke="#dfe3e8" stroke-width="2"/>
<path d="M1454 1033h8l-4 4z" fill="#c8ccd2"/>
<path d="M1469 1022v28" stroke="#1b2029"/>
<path class="i" d="M1474 1029v15h15M1474 1039h5v5"/>
<circle cx="1505" cy="1036" r="6.500" class="i"/><path class="i" d="M1505 1036l7-7M1505 1036h8"/>
<path d="M1521 1033h8l-4 4z" fill="#c8ccd2"/>
<path d="M1538 1030l10 13" stroke="#c85050"/><path d="M1544 1027v15" stroke="#50c090"/>
<path d="M1561 1033h8l-4 4z" fill="#c8ccd2"/>
<path class="i" d="M1578 1043l14-11M1578 1043h15"/>
<rect x="1599" y="1024" width="22" height="23" fill="#5c8fc8"/><rect x="1604" y="1030" width="13" height="13" fill="none" stroke="#eef3fa"/><rect x="1602" y="1027" width="4" height="4" fill="#eef3fa"/>
<path d="M1626 1033h8l-4 4z" fill="#c8ccd2"/>
<rect x="1642" y="1024" width="23" height="23" fill="#5c8fc8"/><rect x="1666" y="1024" width="22" height="23" fill="#5c8fc8"/>
<path d="M1649 1044l5-14 5 14-5-3z" fill="#eef3fa"/><circle cx="1660" cy="1030" r="2" fill="none" stroke="#eef3fa"/>
<path d="M1671 1044l5-14 5 14-5-3z" fill="#eef3fa"/><path d="M1683 1028l1 2 2 1-2 1-1 2-1-2-2-1 2-1z" fill="#eef3fa"/>
<path d="M1694 1044l7-15 7 15-7-4z" fill="#d5dae1"/>
<text x="1718" y="1040" style="font-size:13px;fill:#e4e7ec">1:1</text><path d="M1735 1033h8l-4 4z" fill="#c8ccd2"/>
<circle cx="1761" cy="1036" r="5" fill="none" stroke="#d5dae1" stroke-width="3.500"/><circle cx="1761" cy="1036" r="8" fill="none" stroke="#d5dae1" stroke-width="2" stroke-dasharray="3 3.300"/>
<path d="M1778 1033h8l-4 4z" fill="#c8ccd2"/>
<path d="M1803 1028v16M1795 1036h16" stroke="#e4e7ec" stroke-width="2"/>
<rect x="1819" y="1028" width="6" height="6" class="i"/><circle cx="1832" cy="1032" r="3" class="i"/><path class="i" d="M1826 1037l4 6h-8z"/>
<path d="M1851 1027l8 4v8l-8 5-8-5v-8z" fill="#4878b8"/><rect x="1846" y="1035" width="9" height="6" fill="#e0b840"/><path d="M1853 1040l3 3 6-6" stroke="#60d080" stroke-width="1.800" fill="none"/><path d="M1849 1029v5M1846 1031h6" stroke="#e4e7ec"/>
<rect x="1875" y="1029" width="15" height="13" fill="#444c5a" stroke="#d5dae1"/><path class="i" d="M1879 1039l7-7M1883 1032h3v3M1879 1036v3h3"/>
<path d="M1896 1029h16M1896 1035.500h16M1896 1042h16" stroke="#dfe3e8" stroke-width="2"/>
</svg>
</body></html>
